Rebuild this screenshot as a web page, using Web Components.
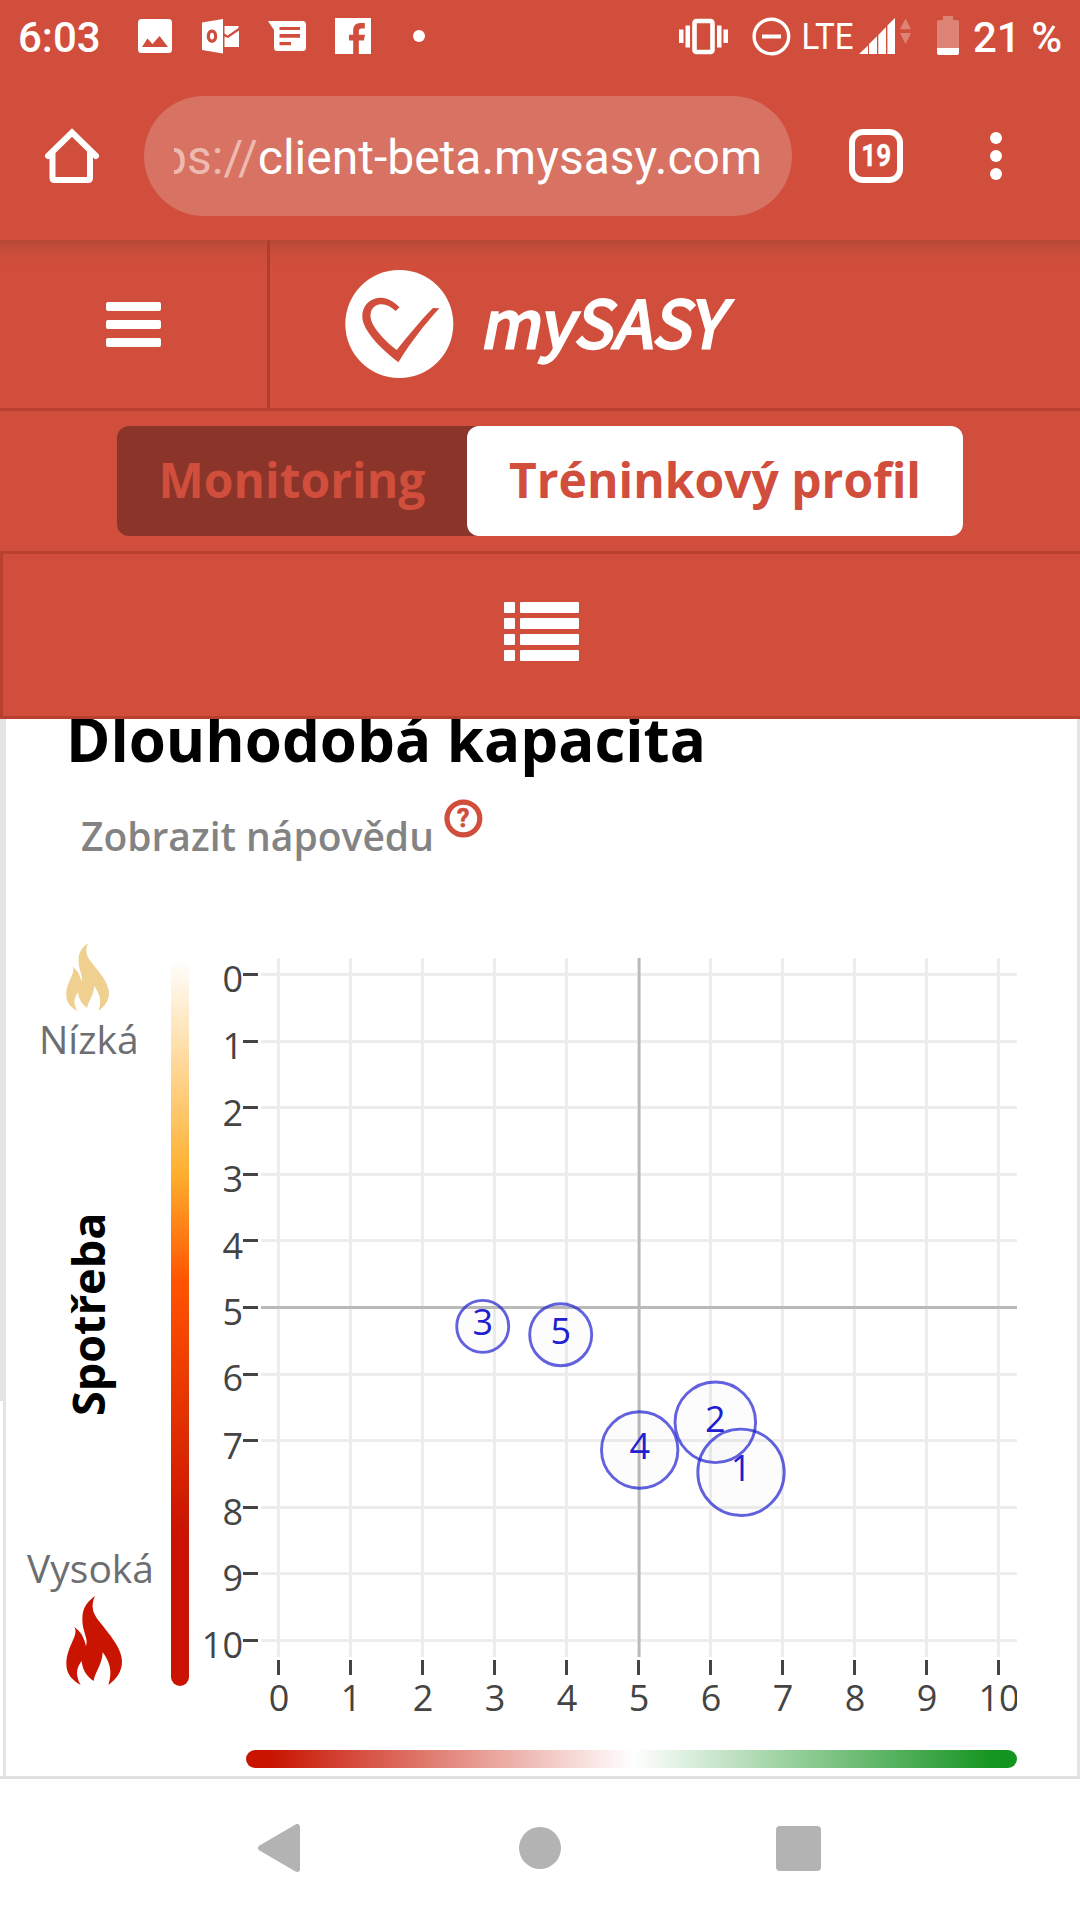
<!DOCTYPE html>
<html lang="cs">
<head>
<meta charset="utf-8">
<title>mySASY</title>
<style>
html,body{margin:0;padding:0}
body{width:1080px;height:1920px;overflow:hidden;background:#fff;font-family:"Open Sans","Noto Sans",sans-serif}
</style>
</head>
<body>
<phone-screen>
  <status-bar time="6:03" battery="21 %"></status-bar>
  <browser-bar tabs="19"><span slot="scheme">https://</span><span slot="host">client-beta.mysasy.com</span></browser-bar>
  <app-header></app-header>
  <tab-switch><span slot="off">Monitoring</span><span slot="on">Tréninkový profil</span></tab-switch>
  <list-bar></list-bar>
  <capacity-card>
    <span slot="title">Dlouhodobá kapacita</span>
    <span slot="help">Zobrazit nápovědu</span>
    <level-scale slot="scale"><span slot="low">Nízká</span><span slot="name">Spotřeba</span><span slot="high">Vysoká</span></level-scale>
    <bubble-chart slot="chart"></bubble-chart>
  </capacity-card>
  <system-nav></system-nav>
</phone-screen>
<script>
const define = (name, html, setup) => customElements.define(name, class extends HTMLElement {
  constructor() {
    super();
    this.attachShadow({mode: 'open'}).innerHTML = html;
  }
  connectedCallback() { if (setup) setup(this, this.shadowRoot); }
});

define('phone-screen', `<style>
:host{display:flex;flex-direction:column;width:1080px;height:1920px;overflow:hidden;background:#fff}
</style><slot></slot>`);

define('status-bar', `<style>
:host{display:flex;flex:none;height:72px;background:#d04e3b;color:#fff;font:500 42px/76px Roboto,sans-serif}
svg{display:block;flex:none}
.t{width:138px;box-sizing:border-box;padding-left:18px;white-space:nowrap}
.b{white-space:nowrap;margin-left:13px}
</style>
<div class="t" id="time"></div>
<svg width="541" height="72" viewBox="138 0 541 72" fill="#fff">
  <path fill-rule="evenodd" d="M141 19h27.500a3.500 3.500 0 0 1 3.500 3.500v27a3.500 3.500 0 0 1-3.500 3.500H141.500a3.500 3.500 0 0 1-3.500-3.500v-27A3.500 3.500 0 0 1 141.500 19zM142 47H168L159.500 36 152.500 44 147.500 38.500z"/>
  <path fill-rule="evenodd" d="M202 22.500L223 19V53.500L202 50zM212 29.500c-3 0-5.200 2.700-5.200 6.700s2.200 6.500 5.200 6.500 5.200-2.600 5.200-6.500-2.200-6.700-5.200-6.700zm0 3.200c1.300 0 2.100 1.300 2.100 3.500s-.8 3.300-2.100 3.300-2.100-1.200-2.100-3.300.8-3.500 2.100-3.500z"/>
  <path d="M224.500 26H238.500V28L227.500 35.500 224.500 33.500zM224.500 36.500L228 38 239 30.500V47H224.500z"/>
  <path fill-rule="evenodd" d="M268 21H302.500a3.500 3.500 0 0 1 3.500 3.500v23a3.500 3.500 0 0 1-3.500 3.500H277.500a3.500 3.500 0 0 1-3.500-3.500V30zM279.500 27v3H300v-3zM279.500 34v3.700H300V34zM279.500 42v3.300H291V42z"/>
  <path fill-rule="evenodd" d="M335 18H371V54H358.800V40.500h5L365 34.800H358.800V31.500c0-2 .8-3 2.800-3H364.800V23H360.500c-5 0-7.300 3-7.300 7.800v4H349V40.500h4.200V54H335z"/>
  <circle cx="419" cy="36" r="6"/>
</svg>
<svg width="281" height="72" viewBox="679 0 281 72" fill="#fff">
  <path d="M679 29.500h4.500v13.500H679zM685.500 25.500h4.500v22h-4.500zM717 25.500h4.500v22H717zM723.500 29.500h4.500v13.500h-4.500z"/>
  <rect x="694.500" y="21" width="18" height="31" rx="2" fill="none" stroke="#fff" stroke-width="4.600"/>
  <circle cx="771.400" cy="36.500" r="17.300" fill="none" stroke="#fff" stroke-width="3.400"/>
  <path d="M762 34.500h19v4h-19z"/>
  <text x="801.500" y="49" font-family="Roboto" font-weight="400" font-size="37.500" textLength="52" lengthAdjust="spacingAndGlyphs">LTE</text>
  <path d="M859 54L868 45.500V54zM869 44L877 36.200V54H869zM878.300 35L886 27V54H878.300zM887.400 25.600L895 18V54H887.400z"/>
  <path fill="#de8477" d="M900 29.200L905.500 18.500 911 29.200zM900 33L905.500 44 911 33z"/>
  <path fill="#de8477" d="M943 16h10v4h4a2 2 0 0 1 2 2V48H937V22a2 2 0 0 1 2-2h4z"/>
  <path d="M937 48h22v5a2 2 0 0 1-2 2H939a2 2 0 0 1-2-2z"/>
</svg>
<div class="b" id="bat"></div>`, (h, r) => {
  r.getElementById('time').textContent = h.getAttribute('time');
  r.getElementById('bat').textContent = h.getAttribute('battery');
});

define('browser-bar', `<style>
:host{display:flex;flex:none;height:168px;background:#d04e3b;padding-top:24px;box-sizing:border-box;color:#fff;font:400 48px/124px Roboto,sans-serif}
svg{display:block;flex:none}
.pill{width:648px;height:120px;border-radius:60px;background:#d87263;box-sizing:border-box;padding:0 30px 0 30px}
.url{overflow:hidden;display:flex;justify-content:flex-end;white-space:nowrap;height:120px}
.s{color:#edbab2}
</style>
<svg width="144" height="120" viewBox="0 96 144 120"><path d="M48 156L72 132.500 96 156M52.500 153V178q0 2 2 2H88q2 0 2-2V153" fill="none" stroke="#fff" stroke-width="6" stroke-linecap="round" stroke-linejoin="miter"/></svg>
<div class="pill"><div class="url"><span class="s"><slot name="scheme"></slot></span><slot name="host"></slot></div></div>
<svg width="288" height="120" viewBox="792 96 288 120" fill="#fff">
  <rect x="852" y="132" width="48" height="48" rx="11" fill="none" stroke="#fff" stroke-width="6"/>
  <text id="n" x="861.300" y="166.300" font-family="Roboto" font-size="30.500" font-weight="700" stroke="#fff" stroke-width=".4" textLength="29.800" lengthAdjust="spacingAndGlyphs"></text>
  <circle cx="996" cy="138" r="6"/><circle cx="996" cy="156" r="6"/><circle cx="996" cy="174" r="6"/>
</svg>`, (h, r) => { r.getElementById('n').textContent = h.getAttribute('tabs'); });

define('app-header', `<style>
:host{display:flex;flex:none;height:171px;box-sizing:border-box;border-bottom:3px solid #b93f2e;
background:linear-gradient(#b74838 0,#bd4a39 4px,#c64c3a 9px,#cc4d3b 16px,#d04e3b 25px)}
.m{width:270px;box-sizing:border-box;border-right:3px solid #b03c2b;display:flex;flex-direction:column;gap:9px;padding:62px 0 0 106px}
.m i{display:block;width:55px;height:9px;border-radius:2px;background:#fff}
svg{display:block}
</style>
<div class="m"><i></i><i></i><i></i></div>
<svg width="810" height="168" viewBox="270 240 810 168">
  <circle cx="399.300" cy="324" r="54" fill="#fff"/>
  <path fill="#d04e3b" d="M399.500 307.300C394 301.500 387.500 297.700 381 297.700C370 297.700 362.300 305.500 362.300 316.500C362.300 329 378 346.500 398.400 362.300C411 342 424 325 439.400 308.300L432.900 308C420 321 408 336 396.700 350C383.500 340 370.500 325.500 370.500 316C370.500 309 374.500 304.500 381 304.200C386 304 391 306.500 395.700 311z"/>
  <text transform="translate(479.500 347.500) skewX(-11)" x="0" y="0" fill="#fff" stroke="#fff" stroke-width="3" font-family="Noto Sans CJK SC" font-weight="400" font-size="65" textLength="244" lengthAdjust="spacingAndGlyphs">mySASY</text>
</svg>`);

define('tab-switch', `<style>
:host{display:flex;flex:none;height:140px;background:#d04e3b;box-sizing:border-box;padding:15px 117px;font-weight:700;font-size:48px;line-height:108px;color:#d04e3b}
.g{display:flex;width:846px;height:110px;border-radius:12px;background:#8b3429;white-space:nowrap}
.a{width:350px;text-align:center}
.b{width:496px;text-align:center;background:#fff;border-radius:12px}
</style><div class="g"><div class="a"><slot name="off"></slot></div><div class="b"><slot name="on"></slot></div></div>`);

define('list-bar', `<style>
:host{display:flex;flex:none;height:168px;box-sizing:border-box;background:#d04e3b;border:3px solid #b93f2e;border-right:0;padding:48px 0 0 501px}
.i{display:grid;grid-template-columns:11px 59px;grid-auto-rows:11px;gap:5px;height:59px}
.i i{background:#fff;border-radius:1px}
</style><div class="i">${'<i></i>'.repeat(8)}</div>`);

define('capacity-card', `<style>
:host{display:flex;flex:none;height:1057px;background:linear-gradient(#e3e4e6 0 682px,#fff 682px)}
.card{flex:1;margin-left:3px;box-sizing:border-box;border:solid #e3e4e6;border-width:0 3px;background:#fff;overflow:hidden;display:flex;flex-direction:column}
h1{margin:0;font-size:60px;line-height:84px;height:84px;font-weight:700;color:#000;padding-left:60px;margin-top:-22px;white-space:nowrap}
.help{display:flex;height:80px;margin-top:13px;padding-left:75px;color:#838383;font-weight:600;font-size:39px;white-space:nowrap}
.help span{width:363px;line-height:84px}
.help svg{display:block;margin-top:5px}
.body{display:flex;margin-top:60px}
</style><div class="card"><h1><slot name="title"></slot></h1>
<div class="help"><span><slot name="help"></slot></span><svg width="40" height="40" viewBox="0 0 40 40"><circle cx="19.400" cy="19.500" r="16.400" fill="none" stroke="#d04e3b" stroke-width="5.200"/><text x="19.200" y="28.300" text-anchor="middle" fill="#d04e3b" stroke="#d04e3b" stroke-width=".6" font-family="Roboto" font-weight="700" font-size="25">?</text></svg></div>
<div class="body"><slot name="scale"></slot><slot name="chart"></slot></div></div>`);

const flame = (w, h, c) => `<svg width="${w}" height="${h}" viewBox="0 0 168 266" preserveAspectRatio="none"><path fill="${c}" d="M87 0C60 20 49 38 49 70C49 100 62 120 62 137L60 151C55 122 42 105 24 92C42 115 1 150 1 203C1 235 20 251 44 266C30 240 28 218 47 194C50 225 66 243 83 254C85 230 109 205 110 168C128 192 142 222 127 266C153 246 168 225 168 195C168 155 128 112 100 76C82 54 72 32 87 0z"/></svg>`;

define('level-scale', `<style>
:host{display:flex;width:183px;height:800px;font-size:39px;color:#6d6e71}
.l{width:165px;display:flex;flex-direction:column;box-sizing:border-box}
svg{display:block;margin-left:60px}
.f{padding-top:9px;height:68px}
.t{height:54px;line-height:54px;white-space:nowrap}
.low{padding-left:33px;margin-top:1px}
.name{height:440px;margin-top:28px;writing-mode:vertical-rl;transform:rotate(180deg);font-weight:700;font-size:45px;line-height:60px;width:60px;margin-left:52px;color:#000;text-align:center;white-space:nowrap}
.high{padding-left:21px;margin:7px 0 1px}
.bar{width:18px;height:726px;margin-top:26px;border-radius:9px;background:linear-gradient(#fff 0,#feaf2e 29.500%,#ff5500 44%,#c81400 79%)}
</style><div class="l"><div class="f">${flame(43,68,'#f0d090')}</div><div class="t low"><slot name="low"></slot></div>
<div class="name"><slot name="name"></slot></div>
<div class="t high"><slot name="high"></slot></div>${flame(56,89,'#c81400')}</div><div class="bar"></div>`);

define('bubble-chart', `<style>
:host{display:block;width:828px}
svg{display:block}
.bar{width:771px;height:18px;margin-left:57px;margin-top:10px;border-radius:9px;background:linear-gradient(90deg,#c81400 3%,#fff 50.200%,#149420 97%)}
</style><svg width="828" height="806" viewBox="189 934 828 806" font-size="36" fill="#444"></svg><div class="bar"></div>`, (h, r) => {
  const X = i => 278.5 + 72 * i, Y = i => Math.round(974.5 + 66.6 * i - .5) + .5;
  const base = [992, 1058.6, 1125.6, 1191.6, 1258.6, 1325, 1391, 1458.6, 1524.6, 1591, 1657.6];
  let s = '';
  for (let i = 0; i <= 10; i++) s += `<path d="M261 ${Y(i)}H1017M${X(i)} 958V1657" stroke="#ededed" stroke-width="3"/>`;
  s += `<path d="M261 1307.500H1017" stroke="#bababa" stroke-width="3"/><path d="M639.200 958V1657" stroke="#bababa" stroke-width="2.800"/>`;
  for (let i = 0; i <= 10; i++) s += `<path d="M243 ${Y(i)}H258M${X(i)} 1660V1675" stroke="#444" stroke-width="3"/><text x="243" y="${base[i]}" text-anchor="end">${i}</text><text x="${X(i) + .5}" y="1710.700" text-anchor="middle">${i}</text>`;
  for (const [n, x, y, q, b] of [[5,560.7,1334.7,31,1344],[4,639.7,1450,38.2,1459],[3,482.7,1326.4,26,1335],[2,715.3,1422.3,40.3,1432],[1,741,1472.3,43.2,1481]])
    s += `<circle cx="${x}" cy="${y}" r="${q}" fill="#000" fill-opacity=".01" stroke="#2020d0" stroke-opacity=".7" stroke-width="2.900"/><text x="${x}" y="${b}" text-anchor="middle" fill="#2020d0">${n}</text>`;
  r.querySelector('svg').innerHTML = s;
});

define('system-nav', `<style>
:host{display:flex;flex:none;height:144px;box-sizing:border-box;border-top:3px solid #e0e0e0;background:#fff;align-items:center;padding:0 0 3px 258px}
svg{display:block}
.c{width:42px;height:42px;border-radius:50%;background:#b3b3b3;margin-left:219px}
.s{width:45px;height:45px;border-radius:4px;background:#b3b3b3;margin-left:215px}
</style><svg width="42" height="48" viewBox="0 0 42 48"><path d="M3 24L39 3V45z" fill="#b3b3b3" stroke="#b3b3b3" stroke-width="6" stroke-linejoin="round"/></svg><div class="c"></div><div class="s"></div>`);
</script>
</body>
</html>
